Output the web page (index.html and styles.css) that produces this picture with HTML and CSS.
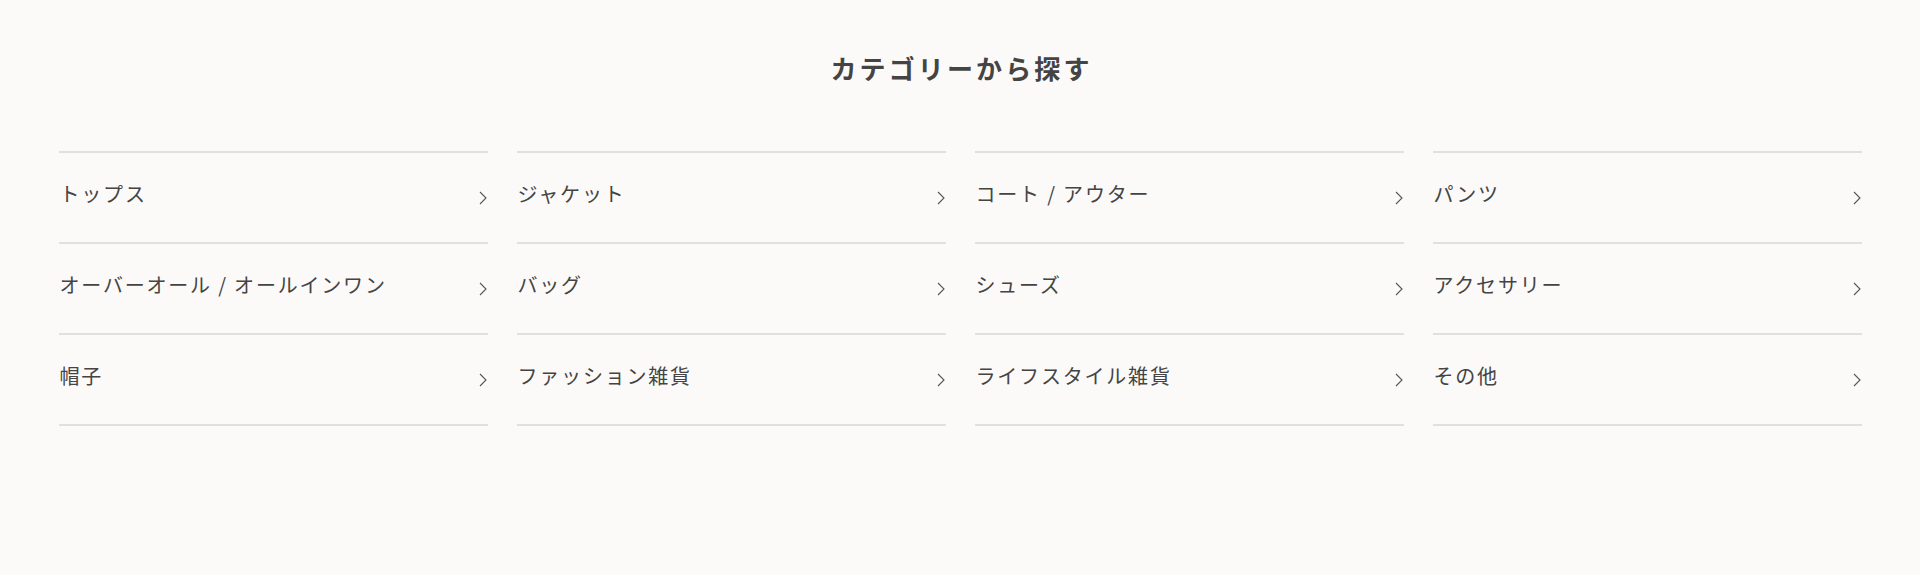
FILE: index.html
```html
<!DOCTYPE html>
<html lang="ja">
<head>
<meta charset="utf-8">
<title>カテゴリーから探す</title>
<link rel="stylesheet" href="styles.css">
</head>
<body>
<section class="category">
  <h2 class="category__title">カテゴリーから探す</h2>
  <ul class="category__list">
    <li class="category__item"><a class="category__link" href="#"><span class="category__name">トップス</span><svg class="chev" viewBox="0 0 8 14"><path d="M1 1l6 6-6 6"/></svg></a></li>
    <li class="category__item"><a class="category__link" href="#"><span class="category__name">ジャケット</span><svg class="chev" viewBox="0 0 8 14"><path d="M1 1l6 6-6 6"/></svg></a></li>
    <li class="category__item"><a class="category__link" href="#"><span class="category__name">コート / アウター</span><svg class="chev" viewBox="0 0 8 14"><path d="M1 1l6 6-6 6"/></svg></a></li>
    <li class="category__item"><a class="category__link" href="#"><span class="category__name">パンツ</span><svg class="chev" viewBox="0 0 8 14"><path d="M1 1l6 6-6 6"/></svg></a></li>
    <li class="category__item"><a class="category__link" href="#"><span class="category__name">オーバーオール / オールインワン</span><svg class="chev" viewBox="0 0 8 14"><path d="M1 1l6 6-6 6"/></svg></a></li>
    <li class="category__item"><a class="category__link" href="#"><span class="category__name">バッグ</span><svg class="chev" viewBox="0 0 8 14"><path d="M1 1l6 6-6 6"/></svg></a></li>
    <li class="category__item"><a class="category__link" href="#"><span class="category__name">シューズ</span><svg class="chev" viewBox="0 0 8 14"><path d="M1 1l6 6-6 6"/></svg></a></li>
    <li class="category__item"><a class="category__link" href="#"><span class="category__name">アクセサリー</span><svg class="chev" viewBox="0 0 8 14"><path d="M1 1l6 6-6 6"/></svg></a></li>
    <li class="category__item"><a class="category__link" href="#"><span class="category__name">帽子</span><svg class="chev" viewBox="0 0 8 14"><path d="M1 1l6 6-6 6"/></svg></a></li>
    <li class="category__item"><a class="category__link" href="#"><span class="category__name">ファッション雑貨</span><svg class="chev" viewBox="0 0 8 14"><path d="M1 1l6 6-6 6"/></svg></a></li>
    <li class="category__item"><a class="category__link" href="#"><span class="category__name">ライフスタイル雑貨</span><svg class="chev" viewBox="0 0 8 14"><path d="M1 1l6 6-6 6"/></svg></a></li>
    <li class="category__item"><a class="category__link" href="#"><span class="category__name">その他</span><svg class="chev" viewBox="0 0 8 14"><path d="M1 1l6 6-6 6"/></svg></a></li>
  </ul>
</section>
</body>
</html>
```
FILE: styles.css
```css
* { box-sizing: border-box; }

html, body {
  margin: 0;
  padding: 0;
  background: #fbfaf8;
  font-family: "Noto Sans CJK JP", "Noto Sans", sans-serif;
  color: #444;
}

.category {
  width: 1803px;
  margin: 0 auto;
  padding-top: 48px;
}

.category__title {
  margin: 0 0 64px;
  padding-left: 0.12em;
  text-align: center;
  font-size: 26px;
  line-height: 39px;
  font-weight: 700;
  letter-spacing: 0.12em;
  color: #444;
}

.category__list {
  list-style: none;
  margin: 0;
  padding: 0;
  display: grid;
  grid-template-columns: repeat(4, 1fr);
  column-gap: 29px;
}

.category__item {
  border-top: 2px solid #e2e0dd;
}

.category__item:nth-last-child(-n+4) {
  border-bottom: 2px solid #e2e0dd;
}

.category__link {
  display: flex;
  align-items: center;
  justify-content: space-between;
  height: 89px;
  padding: 0 1px 0 1px;
  text-decoration: none;
  color: #444;
}

.category__name {
  font-size: 20px;
  line-height: 30px;
  letter-spacing: 0.09em;
  padding-bottom: 8px;
}

.chev {
  width: 8px;
  height: 14px;
  flex: none;
  fill: none;
  stroke: #555;
  stroke-width: 1.1;
}
```
